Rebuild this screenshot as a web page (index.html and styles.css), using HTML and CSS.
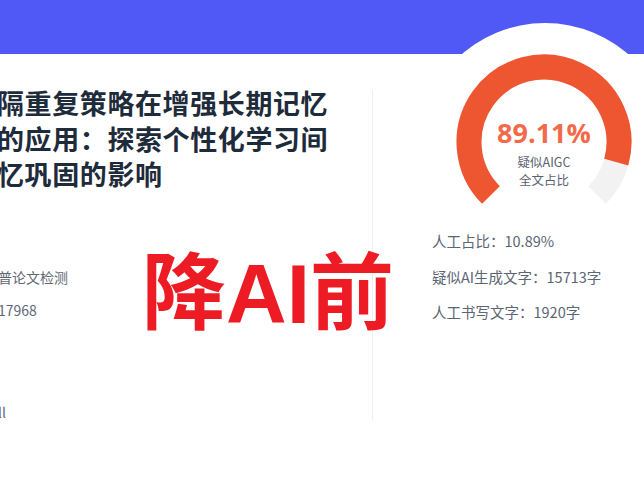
FILE: index.html
```html
<!DOCTYPE html>
<html lang="zh-CN">
<head>
<meta charset="utf-8">
<title>检测报告</title>
<link rel="stylesheet" href="styles.css">
</head>
<body>
<header class="topbar"></header>
<div class="bulge"></div>
<main class="content">
  <section class="left">
    <h1 class="title">
      <span class="line">隔重复策略在增强长期记忆</span>
      <span class="line">的应用：探索个性化学习间</span>
      <span class="line">忆巩固的影响</span>
    </h1>
    <p class="meta meta-first">普论文检测</p>
    <p class="meta">17968</p>
    <p class="meta meta-last">ll</p>
  </section>
  <div class="divider"></div>
  <section class="right">
    <div class="gauge">
      <svg class="gauge-svg" width="176" height="160" viewBox="0 0 176 160">
        <path d="M 34.97 141.03 A 75 75 0 1 1 141.03 141.03" fill="none" stroke="#f2f2f2" stroke-width="25"/>
        <path d="M 34.97 141.03 A 75 75 0 1 1 160.24 108.17" fill="none" stroke="#ee5632" stroke-width="25"/>
      </svg>
      <div class="gauge-label">
        <div class="pct">89.11%</div>
        <div class="cap cap-first">疑似AIGC</div>
        <div class="cap">全文占比</div>
      </div>
    </div>
    <ul class="stats">
      <li>人工占比：10.89%</li>
      <li>疑似AI生成文字：15713字</li>
      <li>人工书写文字：1920字</li>
    </ul>
  </section>
</main>
<div class="stamp">降AI前</div>
</body>
</html>
```

FILE: styles.css
```css
html, body {
  margin: 0;
  padding: 0;
  background: #ffffff;
}
body {
  position: relative;
  width: 644px;
  height: 484px;
  overflow: hidden;
  font-family: "Noto Sans CJK SC", "Liberation Sans", sans-serif;
}
.topbar {
  height: 54px;
  background: #5058f5;
}
.bulge {
  position: absolute;
  left: 418px;
  top: 23px;
  width: 254px;
  height: 254px;
  border-radius: 50%;
  background: #ffffff;
}
.content {
  position: relative;
  display: flex;
  align-items: flex-start;
}
.left {
  width: 372px;
  flex: none;
}
.title {
  margin: 31px 0 0 -3px;
  font-size: 27px;
  letter-spacing: 0.6px;
  line-height: 35.5px;
  font-weight: 700;
  color: #1e2b3b;
}
.title .line {
  display: block;
  white-space: nowrap;
}
.meta {
  margin: 13px 0 0 -2px;
  font-size: 14px;
  line-height: 20px;
  color: #5f6877;
}
.meta-first {
  margin-top: 75px;
}
.meta-last {
  margin-top: 82px;
}
.divider {
  flex: none;
  width: 1px;
  height: 330px;
  margin-top: 36px;
  background: #efefef;
}
.right {
  flex: 1;
  padding-left: 59px;
}
.gauge {
  position: relative;
  width: 176px;
  height: 160px;
  margin-left: 24px;
}
.gauge-svg {
  display: block;
}
.gauge-label {
  position: absolute;
  left: 0;
  top: 62px;
  width: 176px;
  text-align: center;
}
.pct {
  font-family: "Open Sans", "Liberation Sans", sans-serif;
  font-size: 27px;
  font-weight: 700;
  line-height: 34px;
  color: #f26a4a;
}
.cap {
  font-size: 12.5px;
  line-height: 18px;
  color: #5a6170;
}
.cap-first {
  margin-top: 3px;
}
.stats {
  list-style: none;
  margin: 9px 0 0 0;
  padding: 0;
}
.stats li {
  font-size: 14.5px;
  line-height: 35.5px;
  color: #5c6574;
  white-space: nowrap;
}
.stamp {
  position: absolute;
  left: 142px;
  top: 252px;
  font-family: "Liberation Sans", "Noto Sans CJK SC", sans-serif;
  font-size: 84px;
  line-height: 84px;
  font-weight: 700;
  color: #ed1c24;
  white-space: nowrap;
}
```
